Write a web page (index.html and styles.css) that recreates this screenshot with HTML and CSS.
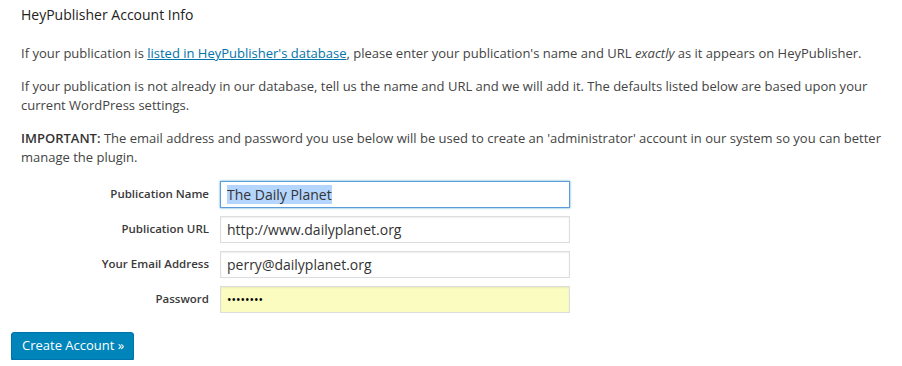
FILE: index.html
```html
<!DOCTYPE html>
<html lang="en">
<head>
    <meta charset="UTF-8">
    <meta name="viewport" content="width=device-width, initial-scale=1.0">
    <title>HeyPublisher Account Info</title>
    <link rel="stylesheet" href="styles.css">
</head>
<body>

    <div class="wrap">
        <h3 class="title">HeyPublisher Account Info</h3>

        <div class="intro">
            <p>If your publication is <a href="#">listed in HeyPublisher's database</a>, please enter your publication's name and URL <em>exactly</em> as it appears on HeyPublisher.</p>
            <p>If your publication is not already in our database, tell us the name and URL and we will add it. The defaults listed below are based upon your current WordPress settings.</p>
            <p><strong>IMPORTANT:</strong> The email address and password you use below will be used to create an 'administrator' account in our system so you can better manage the plugin.</p>
        </div>

        <form id="accountForm" class="form-table">
            <label for="pub_name">Publication Name</label>
            <input type="text" id="pub_name" name="pub_name" value="The Daily Planet" autofocus>

            <label for="pub_url">Publication URL</label>
            <input type="text" id="pub_url" name="pub_url" value="http://www.dailyplanet.org">

            <label for="email">Your Email Address</label>
            <input type="text" id="email" name="email" value="perry@dailyplanet.org">

            <label for="password">Password</label>
            <input type="password" id="password" name="password" class="autofill" value="12345678">
        </form>

        <div class="submit">
            <button type="submit" form="accountForm" class="button-primary">Create Account &raquo;</button>
        </div>
    </div>

    <script>
        // 選取第一個欄位的文字
        const nameField = document.getElementById('pub_name');
        nameField.focus();
        nameField.select();
    </script>
</body>
</html>
```

FILE: styles.css
```css
:root {
    --text-color: #444;
    --link-color: #0073aa;
    --border-color: #ddd;
    --focus-color: #5b9dd9;
    --button-bg: #0085ba;
    --button-border: #0073aa;
    --autofill-bg: #fafcc0;
    --font-family: "Open Sans", "Liberation Sans", sans-serif;
}

* {
    margin: 0;
    padding: 0;
    box-sizing: border-box;
}

body {
    font-family: var(--font-family);
    font-size: 13px;
    line-height: 1.5;
    color: var(--text-color);
    background: #fff;
}

.wrap {
    padding: 5px 11px 0;
}

/* 標題 */
.title {
    font-size: 14px;
    font-weight: 400;
    line-height: 20px;
    color: #222;
    margin-left: 10px;
}

/* 說明段落 */
.intro {
    margin: 19px 0 0 10px;
}

.intro p {
    margin: 13px 0;
}

.intro a {
    color: var(--link-color);
    text-decoration: underline;
}

.intro strong {
    font-weight: 600;
    color: #333;
}

/* 表單 */
.form-table {
    display: grid;
    grid-template-columns: 198px 350px;
    column-gap: 11px;
    row-gap: 8px;
    align-items: center;
}

.form-table label {
    text-align: right;
    font-size: 11.5px;
    font-weight: 600;
    color: #3a3a3a;
}

.form-table input {
    height: 27px;
    padding: 0 6px;
    border: 1px solid var(--border-color);
    box-shadow: inset 0 1px 2px rgba(0, 0, 0, 0.07);
    font-family: inherit;
    font-size: 14px;
    color: #333;
    background: #fff;
}

.form-table input:focus {
    outline: none;
    border-color: var(--focus-color);
    box-shadow: 0 0 2px rgba(30, 140, 190, 0.8);
}

.form-table input::selection {
    background: #b4d5fe;
}

.form-table input.autofill {
    background: var(--autofill-bg);
    font-size: 12px;
    color: #000;
}

/* 送出按鈕 */
.submit {
    margin-top: 19px;
}

.button-primary {
    height: 28px;
    padding: 0 9px 1px 10px;
    background: var(--button-bg);
    border: 1px solid var(--button-border);
    border-radius: 3px;
    box-shadow: 0 1px 0 #006799;
    color: #fff;
    font-family: inherit;
    font-size: 13px;
    cursor: pointer;
}
```
